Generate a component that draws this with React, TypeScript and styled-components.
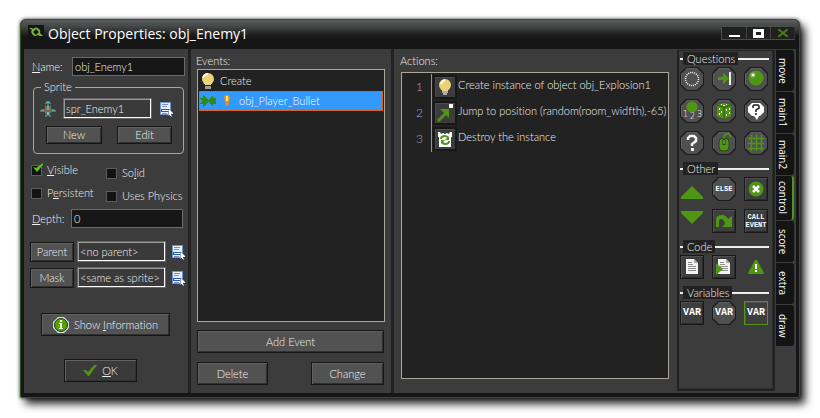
import React from "react";
import styled, { createGlobalStyle, css } from "styled-components";

const GREEN = "#4f9614";

const GlobalStyle = createGlobalStyle`
  *, *::before, *::after { box-sizing: border-box; }
  body { margin: 0; background: #fff; }
  button, input { font: inherit; color: inherit; }
  svg { display: block; flex: none; }
`;

const Desktop = styled.div`
  display: flex;
  min-height: 100vh;
  padding: 19px 20px 20px;
  font: 300 11px/16px Lato, "Liberation Sans", sans-serif;
  font-variant-ligatures: none;
  color: #f0f0f0;
`;

const Window = styled.main`
  flex: 1;
  min-width: 0;
  display: flex;
  flex-direction: column;
  background: #161616;
  border: 1px solid #35521c;
  border-radius: 6px 6px 2px 2px;
  box-shadow: 0 0 3px 1px rgba(0, 0, 0, 0.45), 5px 6px 8px rgba(0, 0, 0, 0.85);
`;

const TitleBar = styled.header`
  height: 29px;
  display: flex;
  align-items: flex-start;
  padding-left: 7px;
  border-radius: 5px 5px 0 0;
  background: linear-gradient(#5a5e5e 0, #434545 7px, #1c1c1c 15px, #161616 18px);
`;

const Logo = styled.span`
  width: 16px;
  height: 16px;
  margin-top: 5px;
  background: #151515;
`;

const Title = styled.h1`
  flex: 1;
  margin: 3px 0 0 4px;
  font: 14px/22px "Open Sans", "Noto Sans", sans-serif;
  color: #fff;
`;

const WindowButtons = styled.div`
  display: flex;
  margin: 6px 4px 0 0;
  border: 1px solid #4c4c4c;
  border-right-color: #333;
`;

const WindowButton = styled.button`
  width: 24px;
  height: 12px;
  padding: 0;
  border: 0;
  background: #202020;
  display: grid;
  place-items: center;
  & + & { border-left: 1px solid #444; }
`;

const Body = styled.div`
  flex: 1;
  display: flex;
  margin: 0 3px 4px;
  background: #3c3c3c;
`;

const Properties = styled.section`
  flex: none;
  width: 167px;
  padding: 8px 2px 0 6px;
  border-right: 3px solid #222;
`;

const FieldRow = styled.div`
  display: flex;
  padding-left: 2px;
  margin-right: 1px;
  align-items: center;
`;

const FieldLabel = styled.label`
  width: 40px;
  white-space: nowrap;
`;

const TextInput = styled.input`
  flex: 1;
  min-width: 0;
  height: 19px;
  padding: 0 2px;
  border: 1px solid #6a6a6a;
  background: #171717;
  outline: 0;
`;

const Group = styled.fieldset`
  min-width: 0;
  margin: 4px 2px 8px 3px;
  padding: 4px 7px 9px 6px;
  border: 1px solid #aaa799;
  border-radius: 4px;
`;

const Legend = styled.legend`
  padding: 0 3px;
  margin-left: 1px;
  line-height: 14px;
`;

const PickerRow = styled.div<{ $gap?: number }>`
  display: flex;
  align-items: center;
  gap: ${(p) => p.$gap ?? 3}px;
  & + & { margin-top: 5px; }
`;

const ReadonlyInput = styled.input`
  flex: none;
  width: 89px;
  height: 21px;
  padding: 0 2px;
  border: 1px solid #666;
  background: #3a3a3a;
  box-shadow: inset -1px -1px #fff, inset 1px 1px #999;
  outline: 0;
`;

const IconButton = styled.button`
  padding: 0;
  border: 0;
  background: none;
  margin: 1px 0 0 3px;
`;

const PushButton = styled.button<{ $w?: number; $h?: number; $flat?: boolean }>`
  flex: none;
  width: ${(p) => (p.$w ? `${p.$w}px` : "100%")};
  height: ${(p) => p.$h ?? 23}px;
  padding: 0;
  display: flex;
  align-items: center;
  justify-content: center;
  border: 1px solid #161616;
  background: ${(p) => (p.$flat ? "#3a3a3a" : "#525252")};
  box-shadow: inset 1px 1px #626262, inset -1px -1px #303030;
  white-space: nowrap;
`;

const GroupButtons = styled.div`
  display: flex;
  justify-content: space-between;
  margin: 7px 4px 0 6px;
`;

const CheckColumns = styled.div`
  display: flex;
  padding-left: 1px;
`;

const CheckColumn = styled.div<{ $top: number }>`
  display: grid;
  align-content: start;
  gap: 7px;
  padding-top: ${(p) => p.$top}px;
  &:first-child { flex: none; width: 75px; }
`;

const CheckLabel = styled.label`
  position: relative;
  display: flex;
  align-items: center;
  gap: 5px;
  white-space: nowrap;
`;

const CheckInput = styled.input`
  appearance: none;
  width: 11px;
  height: 11px;
  margin: 0;
  border: 1px solid #5c5c5c;
  background: #131313;
`;

const CheckMark = styled.svg`
  position: absolute;
  left: 1px;
  top: 1px;
  pointer-events: none;
`;

const DepthRow = styled(FieldRow)`
  margin: 5px 3px 13px 0;
  label { width: 39px; }
`;

const Footer = styled.div`
  margin-top: 25px;
  display: grid;
  gap: 23px;
`;

const FooterItem = styled.div<{ $indent: number }>`
  padding-left: ${(p) => p.$indent}px;
  ${PushButton} { gap: 5px; }
`;

const Events = styled.section`
  flex: none;
  width: 203px;
  padding: 4px 6px 8px;
  border-right: 3px solid #222;
  display: flex;
  flex-direction: column;
`;

const Heading = styled.h2`
  margin: 0 0 0 -1px;
  font: inherit;
`;

const List = styled.ul`
  flex: 1;
  margin: 0;
  padding: 1px;
  list-style: none;
  background: #222;
  border: 1px solid #aaa799;
`;

const EventItem = styled.li<{ $selected?: boolean }>`
  display: flex;
  align-items: center;
  gap: 3px;
  height: 20px;
  padding-left: 1px;
  border: 1px solid transparent;
  ${(p) =>
    p.$selected &&
    css`
      padding-left: 0;
      color: #fff;
      background: #3399ff;
      border: 1px dotted #d05a10;
    `}
`;

const BulletIcon = styled.svg`
  margin: 0 5px 0 4px;
`;

const EventButtons = styled.div`
  display: grid;
  grid-template-columns: 71px 73px;
  justify-content: space-between;
  gap: 9px 0;
  margin: 8px 1px 0 0;
`;

const Wide = styled.div`
  grid-column: 1 / -1;
`;

const Actions = styled.section`
  flex: 1;
  min-width: 0;
  display: flex;
  flex-direction: column;
  padding: 4px 8px 14px 7px;
`;

const ActionHeading = styled(Heading)`
  margin-bottom: 3px;
`;

const ActionItem = styled.li`
  display: flex;
  height: 26px;
  white-space: nowrap;
`;

const ActionNumber = styled.span`
  flex: none;
  width: 29px;
  padding: 5px 8px 0 0;
  font-size: 12px;
  text-align: right;
  color: #aaa6d8;
  border-right: 1px solid #8f8cc8;
`;

const ActionIcon = styled.span`
  flex: none;
  width: 24px;
  height: 24px;
  margin: 1px 0 0 1px;
  border: 2px solid #181818;
  background: #3c3c3c;
  box-shadow: inset 1px 1px #4c4c4c;
`;

const ActionText = styled.span`
  padding: 3px 0 0 1px;
`;

const Palette = styled.aside`
  flex: none;
  width: 98px;
  margin: 1px 0 2px;
  padding: 1px 2px 0 1px;
  border: 2px solid #222;
  border-top-width: 1px;
  box-shadow: inset -1px -1px #2a2a2a;
`;

const PaletteHeading = styled.h3<{ $first?: boolean }>`
  display: flex;
  align-items: center;
  height: 13px;
  margin: ${(p) => (p.$first ? 0 : 7)}px 2px 2px 0;
  font: inherit;
  line-height: 13px;
  &::before, &::after {
    content: "";
    height: 2px;
    width: 3px;
    background: #eee;
  }
  &::after { flex: 1; }
`;

const HeadingText = styled.span`
  padding: 0 3px 0 4px;
  background: #222;
`;

const Tools = styled.div`
  display: grid;
  grid-template-columns: repeat(3, 24px);
  gap: 8px;
`;

type Shape = "octagon" | "box" | "active" | "bare";

const Tool = styled.button<{ $shape: Shape }>`
  width: 24px;
  height: 24px;
  padding: 0;
  border: 0;
  display: grid;
  place-items: center;
  place-content: center;
  color: #fff;
  background: none;
  ${(p) =>
    p.$shape === "octagon" &&
    css`
      clip-path: polygon(6px 0, 18px 0, 24px 6px, 24px 18px, 18px 24px, 6px 24px, 0 18px, 0 6px);
      background: #1c1c1c;
    `}
  ${(p) =>
    p.$shape === "box" &&
    css`
      background: #3e3e3e;
      box-shadow: inset 0 0 0 1px #181818, inset 2px 2px #505050, inset -2px -2px #2a2a2a;
    `}
  ${(p) =>
    p.$shape === "active" &&
    css`
      background: #3e3e3e;
      box-shadow: inset 0 0 0 1px ${GREEN}, inset 2px 2px #505050;
    `}
`;

const ToolText = styled.span<{ $size: number }>`
  font: bold ${(p) => p.$size}px/8px "Liberation Mono", monospace;
  text-align: center;
  white-space: pre;
`;

const Octagon = styled.span`
  width: 22px;
  height: 22px;
  display: grid;
  place-items: center;
  place-content: center;
  background: #505050;
  clip-path: polygon(6px 0, 16px 0, 22px 6px, 22px 16px, 16px 22px, 6px 22px, 0 16px, 0 6px);
  box-shadow: inset 1px 1px #606060;
`;

const Tabs = styled.nav`
  flex: none;
  width: 21px;
  padding: 1px 2px 0 1px;
  display: flex;
  flex-direction: column;
  gap: 1px;
`;

const Tab = styled.button<{ $active?: boolean }>`
  height: ${(p) => (p.$active ? 44 : 41)}px;
  padding: 0 3px 0 0;
  border: 0;
  border-right: 2px solid ${(p) => (p.$active ? GREEN : "#141414")};
  border-radius: 0 3px 3px 0;
  background: #141414;
  color: #fff;
  writing-mode: vertical-rl;
  font: 10px/12px "Open Sans", "Noto Sans", sans-serif;
  text-align: center;
`;

const ListIcon = () => (
  <svg width="14" height="15" viewBox="0 0 14 15" shapeRendering="crispEdges">
    <path d="M1 0h10v12H1z" fill="#e9eefb" />
    <path d="M0 0h11v13H0zM1 1v11h9V1z" fill="#6f94dc" fillRule="evenodd" />
    <path d="M2 2h6v1H2zM2 4h5v1H2zM2 11h5v1H2z" fill="#7b8ecb" />
    <path d="M1 7h9v3H1z" fill="#2458bd" />
    <path d="M2 8h6v1H2z" fill="#fff" />
    <path d="M8 7h1l4 4v1h-2l1 2-1 1-2-2-1 1z" fill="#fff" stroke="#24427c" strokeWidth="0.5" />
  </svg>
);

const PlaneSvg = styled.svg`
  margin-right: 2px;
`;

const Plane = () => (
  <PlaneSvg width="16" height="16" viewBox="0 0 16 16" shapeRendering="crispEdges">
    <path d="M6 0h4v1h1v2H9v2h2v3h4v1h1v2h-5l-1 3h1v2H9v-1H7v1H5v-2h1l-1-3H0V9h1V8h4V5h2V3H5V1h1z" fill="#4f806b" />
    <path d="M7 5h2v9H7zM2 9h3v1H2zM11 9h3v1h-3z" fill="#76aa95" />
    <path d="M4 8h1v3H4zM11 8h1v3h-1zM7 9h2v2H7zM5 4h1v1H5zM10 4h1v1h-1z" fill="#c93731" />
    <path d="M7 11h2v2H7zM7 1h2v1H7z" fill="#71bfe0" />
  </PlaneSvg>
);

const Bulb = () => (
  <svg width="16" height="16" viewBox="0 0 16 16">
    <circle cx="7" cy="6" r="6" fill="#edd07a" />
    <path d="M2 5q1-4 5-4" stroke="#fffbe5" strokeWidth="2" fill="none" />
    <path d="M4 10h6v2H4z" fill="#f0d27b" />
    <path d="M4 13h6v3H4z" fill="#999e9e" />
  </svg>
);

const svg24 = (children: React.ReactNode, crisp = false) => (
  <svg width="24" height="24" viewBox="0 0 24 24" shapeRendering={crisp ? "crispEdges" : "auto"}>
    {children}
  </svg>
);

const page = (
  <>
    <path d="M6 4h8l4 4v11H6z" fill="#f4f4f4" />
    <path d="M14 4v4h4z" fill="#aaa" />
    <path d="M8 7h4v1H8zM8 9h5v1H8zM8 11h8v1H8zM8 13h8v1H8zM8 15h8v1H8z" fill="#8d8d8d" />
  </>
);

const icons = {
  ring: svg24(<circle cx="12" cy="12" r="6.5" fill="none" stroke="#fff" strokeWidth="1.500" strokeDasharray="1 1" />),
  arrow: svg24(
    <>
      <path d="M6 10h5V6l6 5.500-6 5.500v-4H6z" fill={GREEN} />
      <path d="M17 5h2v13h-2z" fill="#eee" />
    </>,
    true
  ),
  ball: svg24(
    <>
      <circle cx="12" cy="11" r="7.500" fill={GREEN} />
      <circle cx="9" cy="8" r="2.500" fill="#8fc566" />
      <path d="M8 7h2v2H8z" fill="#fff" />
    </>
  ),
  count: svg24(
    <>
      <circle cx="12" cy="8" r="5.500" fill={GREEN} />
      <g fill="#fff" fontFamily="DejaVu Sans, sans-serif" fontSize="8">
        <text x="3" y="18">1</text>
        <text x="10" y="20">2</text>
        <text x="17" y="18">3</text>
      </g>
    </>
  ),
  dice: svg24(
    <>
      <path d="M5 6l7-2 7 2v11l-7 3-7-3z" fill={GREEN} />
      <path d="M5 6l7 2.500L19 6M12 8.500V20" fill="none" stroke="#29520c" />
      <path d="M9 5h1v1H9zM14 5h1v1h-1zM11 6h2v1h-2zM7 9h1v2H7zM9 12h1v2H9zM7 14h1v2H7zM14 10h1v2h-1zM17 9h1v2h-1zM14 15h1v2h-1zM17 13h1v2h-1z" fill="#fff" />
    </>
  ),
  bubble: svg24(
    <>
      <path d="M8 4h8l4 4v5l-4 4h-1l-2 4-3-4H8l-4-4V8z" fill="#fff" />
      <path d="M9 9V7l1-1h4l1 1v2l-3 2v2M12 14v2" fill="none" stroke="#181818" strokeWidth="1.500" />
    </>
  ),
  question: svg24(
    <>
      <path d="M8 9V7l2-2h4l2 2v3l-4 3v2" fill="none" stroke="#f3f3f3" strokeWidth="2.500" />
      <path d="M11 17h3v3h-3z" fill="#f3f3f3" />
    </>
  ),
  mouse: svg24(
    <>
      <rect x="7" y="7" width="10" height="13" rx="4" fill={GREEN} stroke="#24480a" />
      <path d="M12 8v6" stroke="#24480a" strokeWidth="3" />
      <path d="M12 9v4" stroke="#9ab88a" />
      <path d="M12 7V5l2-2h3l2 3" fill="none" stroke={GREEN} strokeWidth="1.500" />
    </>
  ),
  grid: svg24(<path d="M4 7h16v1H4zM4 12h16v1H4zM4 17h16v1H4zM7 4h1v16H7zM12 4h1v16h-1zM17 4h1v16h-1z" fill={GREEN} stroke={GREEN} strokeWidth="0.5" />),
  up: svg24(<path d="M12 9L23 20v2H1v-2z" fill={GREEN} />),
  down: svg24(<path d="M1 2h22v2L12 15 1 4z" fill={GREEN} />),
  exit: svg24(
    <>
      <circle cx="12" cy="12" r="7.500" fill={GREEN} />
      <path d="M9 9l6 6M15 9l-6 6" stroke="#fff" strokeWidth="2.500" />
    </>
  ),
  repeat: svg24(<path d="M4 18v-7q0-5 6-5 4 0 6 4l4-3v11H10l3-3q-1-5-4-5-2 0-2 3v5z" fill={GREEN} />),
  script: svg24(page),
  run: svg24(
    <>
      {page}
      <path d="M4 8l7 6-7 6z" fill={GREEN} />
    </>
  ),
  warn: svg24(
    <>
      <path d="M11 5h2l7 13v1H4v-1z" fill={GREEN} />
      <path d="M11 9h2v5h-2zM11 15h2v2h-2z" fill="#fff" />
    </>
  ),
};

type ToolDef = { label: string; shape: Shape; icon?: React.ReactNode; text?: string; size?: number };

const sections: { title: string; tools: ToolDef[] }[] = [
  {
    title: "Questions",
    tools: [
      { label: "Check empty", shape: "octagon", icon: icons.ring },
      { label: "Check collision", shape: "octagon", icon: icons.arrow },
      { label: "Check object", shape: "octagon", icon: icons.ball },
      { label: "Test instance count", shape: "octagon", icon: icons.count },
      { label: "Test chance", shape: "octagon", icon: icons.dice },
      { label: "Ask question", shape: "octagon", icon: icons.bubble },
      { label: "Test expression", shape: "octagon", icon: icons.question },
      { label: "Check mouse", shape: "octagon", icon: icons.mouse },
      { label: "Check grid", shape: "octagon", icon: icons.grid },
    ],
  },
  {
    title: "Other",
    tools: [
      { label: "Start block", shape: "bare", icon: icons.up },
      { label: "Else", shape: "octagon", text: "ELSE", size: 7 },
      { label: "Exit event", shape: "box", icon: icons.exit },
      { label: "End block", shape: "bare", icon: icons.down },
      { label: "Repeat", shape: "box", icon: icons.repeat },
      { label: "Call event", shape: "box", text: "CALL\nEVENT", size: 7 },
    ],
  },
  {
    title: "Code",
    tools: [
      { label: "Execute code", shape: "box", icon: icons.script },
      { label: "Execute script", shape: "box", icon: icons.run },
      { label: "Comment", shape: "bare", icon: icons.warn },
    ],
  },
  {
    title: "Variables",
    tools: [
      { label: "Set variable", shape: "box", text: "VAR", size: 10 },
      { label: "Test variable", shape: "octagon", text: "VAR", size: 10 },
      { label: "Draw variable", shape: "active", text: "VAR", size: 10 },
    ],
  },
];

const tabs = ["move", "main1", "main2", "control", "score", "extra", "draw"];

const actionIcons = [
  <svg key="b" width="20" height="20" viewBox="0 0 20 20">
    <circle cx="10" cy="8" r="6" fill="#edd07a" />
    <path d="M6 7q1-3 4-4" stroke="#fffbe5" strokeWidth="2" fill="none" />
    <path d="M7 12h6v2H7z" fill="#edd07a" />
    <path d="M7 14h6v2H7zM8 16h4v2H8z" fill="#aaaeae" />
  </svg>,
  <svg key="j" width="20" height="20" viewBox="0 0 20 20">
    <path d="M14 1h4v4h-4z" fill="#fff" />
    <path d="M5 6h9v9l-3-3-7 7-2-2 7-7z" fill={GREEN} />
  </svg>,
  <svg key="d" width="20" height="20" viewBox="0 0 20 20">
    <path d="M3 3h2l1 2 2-1 2 1 2-1 2 1 1-2h2v5h-1v10H4V8H3z" fill="#fff" />
    <path d="M6 10q0-3 4-3 2 0 3 2M14 12q0 3-4 3-2 0-3-2" fill="none" stroke={GREEN} strokeWidth="2" />
    <path d="M14 7v4h-4zM6 15v-4h4z" fill={GREEN} />
  </svg>,
];

const actions = [
  "Create instance of object obj_Explosion1",
  "Jump to position (random(room_widfth),-65)",
  "Destroy the instance",
];

function ToolButton({ tool }: { tool: ToolDef }) {
  const content = tool.text ? <ToolText $size={tool.size ?? 8}>{tool.text}</ToolText> : tool.icon;
  return (
    <Tool $shape={tool.shape} aria-label={tool.label}>
      {tool.shape === "octagon" ? <Octagon>{content}</Octagon> : content}
    </Tool>
  );
}

function Check({ checked, children }: { checked?: boolean; children: React.ReactNode }) {
  return (
    <CheckLabel>
      <CheckInput type="checkbox" defaultChecked={checked} />
      {checked && (
        <CheckMark width="12" height="11" viewBox="0 0 12 11">
          <path d="M1 4l3 1 7-5v2L5 9z" fill="#5cc214" />
        </CheckMark>
      )}
      <span>{children}</span>
    </CheckLabel>
  );
}

export default function App() {
  return (
    <>
      <GlobalStyle />
      <Desktop>
        <Window>
          <TitleBar>
            <Logo>
              <svg width="16" height="16" viewBox="0 0 16 16">
                <path d="M1 3h3l1 1q3-3 6 0 2 2 1 4l3 3h-3l-2-1q-3 2-5 0-3-3-1-5zM8 4L5 7l3 3 3-3z" fill="#78ba35" fillRule="evenodd" />
              </svg>
            </Logo>
            <Title>Object Properties: obj_Enemy1</Title>
            <WindowButtons>
              <WindowButton aria-label="Minimize">
                <svg width="11" height="10"><path d="M0 7h11v2H0z" fill="#fff" /></svg>
              </WindowButton>
              <WindowButton aria-label="Maximize">
                <svg width="11" height="9"><path d="M0 0h11v9H0zM3 3v3h5V3z" fill="#fff" fillRule="evenodd" /></svg>
              </WindowButton>
              <WindowButton aria-label="Close">
                <svg width="10" height="8"><path d="M0 0l10 8M10 0L0 8" stroke="#438013" strokeWidth="2" /></svg>
              </WindowButton>
            </WindowButtons>
          </TitleBar>
          <Body>
            <Properties>
              <FieldRow>
                <FieldLabel htmlFor="name"><u>N</u>ame:</FieldLabel>
                <TextInput id="name" defaultValue="obj_Enemy1" />
              </FieldRow>
              <Group>
                <Legend>Sprite</Legend>
                <PickerRow $gap={5}>
                  <Plane />
                  <ReadonlyInput aria-label="Sprite" readOnly value="spr_Enemy1" />
                  <IconButton aria-label="Choose sprite"><ListIcon /></IconButton>
                </PickerRow>
                <GroupButtons>
                  <PushButton $w={56} $h={18}>New</PushButton>
                  <PushButton $w={55} $h={18}>Edit</PushButton>
                </GroupButtons>
              </Group>
              <CheckColumns>
                <CheckColumn $top={0}>
                  <Check checked><u>V</u>isible</Check>
                  <Check>P<u>e</u>rsistent</Check>
                </CheckColumn>
                <CheckColumn $top={3}>
                  <Check>So<u>l</u>id</Check>
                  <Check>Uses Physics</Check>
                </CheckColumn>
              </CheckColumns>
              <DepthRow>
                <FieldLabel htmlFor="depth"><u>D</u>epth:</FieldLabel>
                <TextInput id="depth" defaultValue="0" />
              </DepthRow>
              <PickerRow>
                <PushButton $w={44} $h={20}>Parent</PushButton>
                <ReadonlyInput aria-label="Parent" readOnly value="<no parent>" />
                <IconButton aria-label="Choose parent"><ListIcon /></IconButton>
              </PickerRow>
              <PickerRow>
                <PushButton $w={44} $h={20}>Mask</PushButton>
                <ReadonlyInput aria-label="Mask" readOnly value="<same as sprite>" />
                <IconButton aria-label="Choose mask"><ListIcon /></IconButton>
              </PickerRow>
              <Footer>
                <FooterItem $indent={11}>
                  <PushButton $w={129}>
                    <svg width="16" height="16" viewBox="0 0 16 16">
                      <path d="M5 0h6l5 5v6l-5 5H5l-5-5V5z" fill="#d9dcf0" />
                      <circle cx="8" cy="8" r="6.500" fill="#57a400" stroke="#173600" />
                      <path d="M7 3h2v2H7zM6 6h3v5h1v1H6v-1h1V7H6z" fill="#fff" />
                    </svg>
                    <span>Show <u>I</u>nformation</span>
                  </PushButton>
                </FooterItem>
                <FooterItem $indent={34}>
                  <PushButton $w={73} $flat>
                    <svg width="14" height="13" viewBox="0 0 14 13">
                      <path d="M0 6h3l2 2 6-7h3L6 12H5z" fill={GREEN} />
                    </svg>
                    <span><u>O</u>K</span>
                  </PushButton>
                </FooterItem>
              </Footer>
            </Properties>
            <Events>
              <Heading>Events:</Heading>
              <List>
                <EventItem>
                  <Bulb />
                  Create
                </EventItem>
                <EventItem $selected>
                  <svg width="16" height="12" viewBox="0 0 16 12" shapeRendering="crispEdges">
                    <path d="M0 3h3V0l5 5 5-5v3h3v6h-3v3L8 7l-5 5V9H0l2-3z" fill="#2f8c1c" />
                  </svg>
                  <BulletIcon width="8" height="12" viewBox="0 0 8 12">
                    <path d="M2 0h4l1 2-2 9H3L1 2z" fill="#ef8e12" />
                    <path d="M3 1h2v5H3z" fill="#ffe772" />
                  </BulletIcon>
                  obj_Player_Bullet
                </EventItem>
              </List>
              <EventButtons>
                <Wide><PushButton>Add Event</PushButton></Wide>
                <PushButton>Delete</PushButton>
                <PushButton>Change</PushButton>
              </EventButtons>
            </Events>
            <Actions>
              <ActionHeading>Actions:</ActionHeading>
              <List>
                {actions.map((text, i) => (
                  <ActionItem key={text}>
                    <ActionNumber>{i + 1}</ActionNumber>
                    <ActionIcon>{actionIcons[i]}</ActionIcon>
                    <ActionText>{text}</ActionText>
                  </ActionItem>
                ))}
              </List>
            </Actions>
            <Palette>
              {sections.map((s, i) => (
                <React.Fragment key={s.title}>
                  <PaletteHeading $first={i === 0}><HeadingText>{s.title}</HeadingText></PaletteHeading>
                  <Tools>{s.tools.map((t) => <ToolButton key={t.label} tool={t} />)}</Tools>
                </React.Fragment>
              ))}
            </Palette>
            <Tabs>
              {tabs.map((t) => <Tab key={t} $active={t === "control"}>{t}</Tab>)}
            </Tabs>
          </Body>
        </Window>
      </Desktop>
    </>
  );
}
